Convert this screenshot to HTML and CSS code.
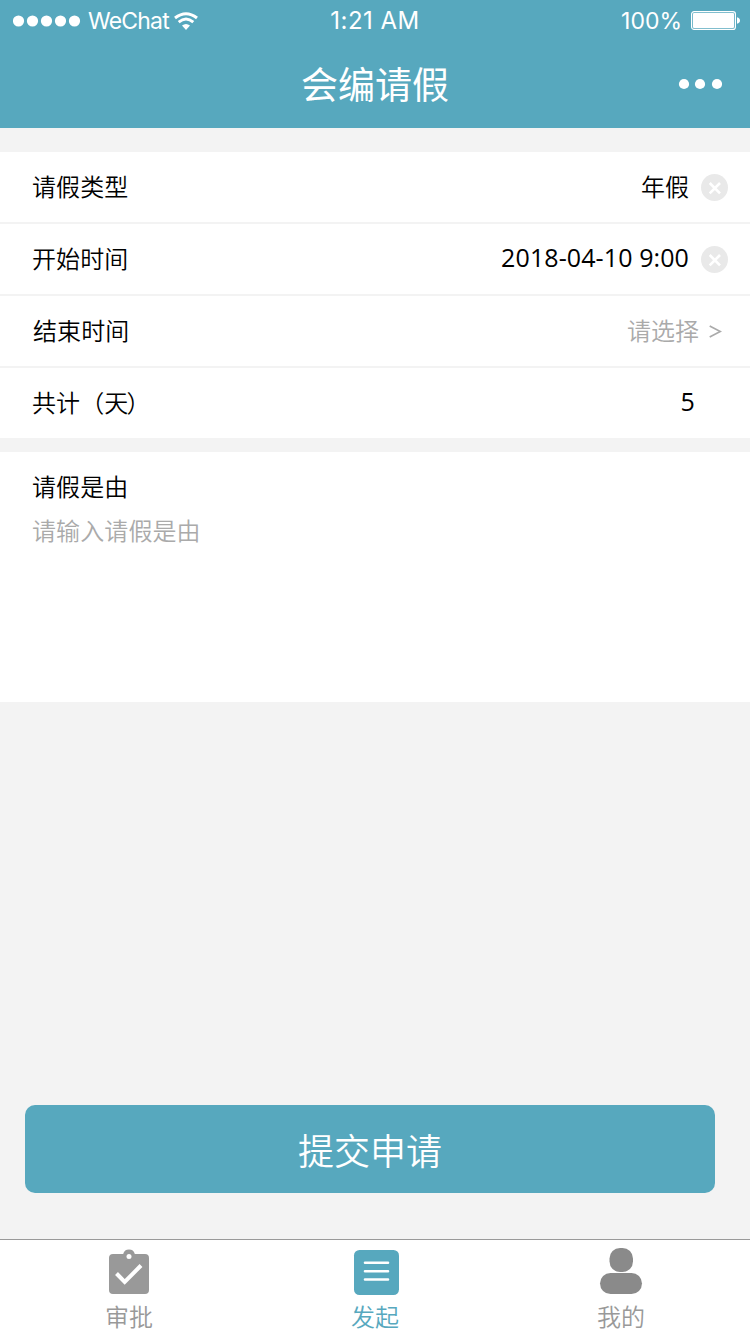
FILE: index.html
```html
<!DOCTYPE html>
<html lang="zh-CN">
<head>
<meta charset="utf-8">
<title>会编请假</title>
<link rel="stylesheet" href="styles.css">
</head>
<body>
<div class="screen">
  <header class="header">
    <div class="status">
      <div class="status-left">
        <svg class="signal" width="70" height="12" viewBox="0 0 70 12" fill="#fff"><circle cx="5.500" cy="6" r="5.600"/><circle cx="19.500" cy="6" r="5.600"/><circle cx="33.500" cy="6" r="5.600"/><circle cx="47.500" cy="6" r="5.600"/><circle cx="61.500" cy="6" r="5.600"/></svg>
        <span class="carrier">WeChat</span>
        <svg class="wifi" width="24" height="18" viewBox="0 0 24 18" fill="none" stroke="#fff"><path d="M1 6Q12-2.600 23 6" stroke-width="3"/><path d="M4.700 10.200Q12 4 19.300 10.200" stroke-width="2.900"/><path d="M8 13.600Q12 10.200 16 13.600L12 18Z" fill="#fff" stroke="none"/></svg>
      </div>
      <span class="clock">1:21 AM</span>
      <div class="status-right">
        <span class="percent">100%</span>
        <svg class="battery" width="50" height="20" viewBox="0 0 50 20"><rect x=".6" y=".6" width="43.800" height="17.800" rx="2.500" fill="none" stroke="#fff" stroke-width="1.200"/><rect x="2" y="2" width="41" height="15" rx="1" fill="#fff"/><path d="M46 6.200Q49 7 49 9.500T46 12.800Z" fill="#fff"/></svg>
      </div>
    </div>
    <div class="nav">
      <h1 class="title">会编请假</h1>
      <svg class="more" width="44" height="12" viewBox="0 0 44 12" fill="#fff"><circle cx="6" cy="6" r="5.100"/><circle cx="22" cy="6" r="5.100"/><circle cx="39" cy="6" r="5.100"/></svg>
    </div>
  </header>

  <main class="content">
    <section class="rows">
      <div class="row"><span class="label">请假类型</span><span class="value">年假</span>
        <svg class="clear" width="27" height="27" viewBox="0 0 27 27"><circle cx="13.500" cy="13.500" r="13.500" fill="#e9e9e9"/><path d="M8.700 9L19 19.300M19 9L8.700 19.300" stroke="#fff" stroke-width="2.600"/></svg></div>
      <div class="row"><span class="label">开始时间</span><span class="value number">2018-04-10 9:00</span>
        <svg class="clear" width="27" height="27" viewBox="0 0 27 27"><circle cx="13.500" cy="13.500" r="13.500" fill="#e9e9e9"/><path d="M8.700 9L19 19.300M19 9L8.700 19.300" stroke="#fff" stroke-width="2.600"/></svg></div>
      <div class="row"><span class="label label-end">结束时间</span><span class="value placeholder">请选择</span>
        <svg class="arrow" width="13" height="13" viewBox="0 0 13 13" fill="none" stroke="#aaa" stroke-width="1.700"><path d="M.7 1L11.300 6.500L.7 12"/></svg></div>
      <div class="row"><span class="label">共计（天<span class="paren">）</span></span><span class="value number total">5</span></div>
    </section>
    <section class="reason">
      <div class="reason-label">请假是由</div>
      <div class="placeholder">请输入请假是由</div>
    </section>
    <button class="submit">提交申请</button>
  </main>

  <nav class="tabs">
    <div class="tab tab-approve">
      <svg class="tab-icon" width="46" height="48" viewBox="0 0 46 48"><path d="M7 6H17.200A6 6 0 0 1 28.800 6H39Q43 6 43 10V42Q43 46 39 46H7Q3 46 3 42V10Q3 6 7 6Z" fill="#999"/><circle cx="23" cy="8.500" r="2.500" fill="#fff"/><path d="M10.500 25.500L18.700 34L35 17.500" fill="none" stroke="#fff" stroke-width="4"/></svg>
      <span>审批</span>
    </div>
    <div class="tab tab-start">
      <svg class="tab-icon" width="48" height="48" viewBox="0 0 48 48"><rect x="3" y="2" width="45" height="45" rx="5.500" fill="#57a8be"/><path d="M14 14.700H37M14 23.200H37M14 31.500H37" stroke="#fff" stroke-width="2.600" stroke-linecap="round"/></svg>
      <span>发起</span>
    </div>
    <div class="tab tab-mine">
      <svg class="tab-icon" width="46" height="48" viewBox="0 0 46 48" fill="#8a8a8a"><rect x="11.500" y="0" width="23.500" height="24" rx="10.500"/><rect x="2" y="25" width="42" height="21" rx="10.500"/></svg>
      <span>我的</span>
    </div>
  </nav>
</div>
</body>
</html>
```
FILE: styles.css
```css
* { box-sizing: border-box; }
body { margin: 0; font-family: "Noto Sans CJK SC", sans-serif; font-size: 24px; font-weight: 350; color: #000; }
.screen { width: 750px; height: 1334px; display: flex; flex-direction: column; background: #f3f3f3; }
svg { display: block; flex: none; }

.header { height: 128px; background: #57a8be; color: #fff; }
.status { height: 41px; display: grid; grid-template-columns: 1fr auto 1fr; align-items: center; padding: 0 9px 0 13px; font-family: Inter, sans-serif; font-size: 23px; font-weight: 400; line-height: 39px; }
.status-left, .status-right { display: flex; align-items: center; }
.status-right { justify-content: flex-end; }
.carrier { margin-left: 5px; padding-top: 2px; letter-spacing: -0.8px; }
.wifi { margin-left: 5px; }
.clock { font-size: 24px; letter-spacing: 0.5px; margin-right: 4px; }
.percent { margin-right: 9px; padding-top: 2px; }
.nav { height: 86px; display: grid; grid-template-columns: 1fr auto 1fr; align-items: center; padding-right: 28px; padding-left: 28px; }
.title { grid-column: 2; margin: 0; font-size: 37px; font-weight: 400; line-height: 82px; padding-bottom: 2px; }
.more { justify-self: end; }

.content { flex: 1; display: flex; flex-direction: column; padding-top: 24px; }
.rows { display: grid; gap: 2px; }
.row { height: 70px; display: flex; align-items: center; background: #fff; padding: 0 22px 0 32px; line-height: 68px; }
.label, .value { padding-bottom: 2px; }
.label, .reason { letter-spacing: 0.1px; }
.label-end { padding-left: 1px; }
.paren { margin-left: -2px; }
.value { margin-left: auto; }
.number { padding-bottom: 4px; font-family: "Open Sans", "Noto Sans", sans-serif; font-size: 25px; font-weight: 400; letter-spacing: 0.1px; }
.clear { margin-left: 12px; }
.placeholder { color: #aaa; }
.arrow { margin: 1px 6px 0 10px; }
.total { margin-right: 33px; }
.reason { height: 250px; margin-top: 14px; padding: 12px 32px; background: #fff; line-height: 44px; }
.submit { width: 690px; height: 88px; margin: auto 35px 46px 25px; padding: 0; border: 0; border-radius: 10px; background: #57a8be; color: #fff; font: 350 36px/88px "Noto Sans CJK SC", sans-serif; }

.tabs { height: 95px; display: flex; justify-content: space-between; padding: 8px 105px 0 105px; border-top: 1px solid #999; background: #fff; color: #999; }
.tab { width: 48px; display: flex; flex-direction: column; align-items: center; line-height: 40px; }
.tab-start { color: #57a8be; }
```
